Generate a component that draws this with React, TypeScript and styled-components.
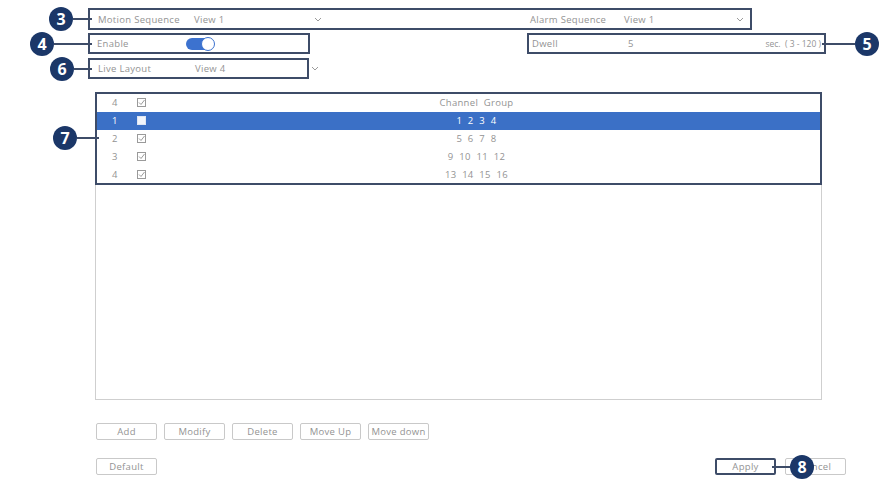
import React from "react";
import styled, { createGlobalStyle } from "styled-components";

const Global = createGlobalStyle`
  html, body { margin: 0; padding: 0; background: #ffffff; }
  body { font-family: "Open Sans", "Liberation Sans", sans-serif; }
`;

const NAVY = "#1b3768";
const FRAME = "#3e4c68";
const TEXT = "#939393";

const Page = styled.div`
  width: 884px;
  height: 481px;
  box-sizing: border-box;
  padding: 8px 0 0 88px;
  display: flex;
  flex-direction: column;
  color: ${TEXT};
  font-size: 9.5px;
  letter-spacing: 0.3px;
  overflow: hidden;
`;

const Framed = styled.div<{ $w: number; $h?: number }>`
  position: relative;
  box-sizing: border-box;
  width: ${(p) => p.$w}px;
  height: ${(p) => p.$h ?? 21}px;
  border: 2px solid ${FRAME};
  display: flex;
  align-items: center;
`;

const Row = styled.div<{ $mt?: number }>`
  display: flex;
  align-items: center;
  margin-top: ${(p) => p.$mt ?? 0}px;
`;

const Label = styled.span<{ $w: number }>`
  width: ${(p) => p.$w}px;
  flex: none;
  white-space: nowrap;
`;

const Range = styled.span`
  flex: 1;
  text-align: right;
  padding-right: 3px;
  font-size: 8.5px;
  letter-spacing: 0;
  white-space: nowrap;
`;

const Chevron = styled.span<{ $ml: number }>`
  margin-left: ${(p) => p.$ml}px;
  display: inline-flex;
  align-items: center;
`;

const Badge = styled.div<{ $side: "left" | "right"; $line: number }>`
  position: absolute;
  top: 50%;
  ${(p) => (p.$side === "left" ? `right: calc(100% + ${p.$line}px);` : `left: calc(100% + ${p.$line}px);`)}
  transform: translateY(-50%);
  width: 24px;
  height: 24px;
  border-radius: 50%;
  background: ${NAVY};
  color: #fff;
  font-family: "Open Sans", "Liberation Sans", sans-serif;
  font-weight: 700;
  font-size: 16px;
  letter-spacing: 0;
  display: flex;
  align-items: center;
  justify-content: center;
  z-index: 3;
  &::after {
    content: "";
    position: absolute;
    top: 50%;
    height: 2px;
    margin-top: -1px;
    width: ${(p) => p.$line + 2}px;
    background: ${FRAME};
    ${(p) => (p.$side === "left" ? "left: 100%;" : "right: 100%;")}
  }
`;

const Toggle = styled.span`
  position: relative;
  width: 28px;
  height: 12px;
  border-radius: 6px;
  background: #3c72cf;
  display: inline-block;
  &::after {
    content: "";
    position: absolute;
    right: -1px;
    top: -1px;
    width: 12px;
    height: 12px;
    border-radius: 50%;
    background: #fff;
    border: 1px solid #3c72cf;
  }
`;

const Panel = styled.div`
  margin: 13px 0 0 7px;
  width: 727px;
  height: 308px;
  box-sizing: border-box;
  border: 1px solid #cfcfcf;
`;

const Table = styled.div`
  position: relative;
  margin: -1px;
  box-sizing: border-box;
  border: 2px solid ${FRAME};
  display: flex;
  flex-direction: column;
`;

const TRow = styled.div<{ $sel?: boolean }>`
  display: grid;
  grid-template-columns: 34px 22px 1fr 20px;
  align-items: center;
  height: 17.8px;
  background: ${(p) => (p.$sel ? "#3b70c6" : "transparent")};
  color: ${(p) => (p.$sel ? "#ffffff" : TEXT)};
`;

const Cell = styled.span<{ $center?: boolean }>`
  text-align: ${(p) => (p.$center ? "center" : "left")};
  padding-left: ${(p) => (p.$center ? 0 : 15)}px;
  white-space: nowrap;
  word-spacing: 3px;
`;

const CheckCell = styled.span`
  padding-left: 6px;
  display: flex;
  align-items: center;
`;

const Check = ({ filled }: { filled?: boolean }) => (
  <svg width="9" height="9" viewBox="0 0 9 9">
    {filled ? (
      <rect x="0.5" y="0.5" width="8" height="8" fill="#f2f5fb" stroke="#dfe6f3" />
    ) : (
      <>
        <rect x="0.5" y="0.5" width="8" height="8" fill="none" stroke="#9a9a9a" />
        <path d="M2 4.5 L4 6.5 L7.5 2" fill="none" stroke="#9a9a9a" strokeWidth="1" />
      </>
    )}
  </svg>
);

const ButtonRow = styled.div<{ $mt: number; $w?: number }>`
  display: flex;
  align-items: center;
  gap: 7px;
  margin: ${(p) => p.$mt}px 0 0 8px;
  width: ${(p) => (p.$w ? `${p.$w}px` : "auto")};
`;

const Btn = styled.button<{ $strong?: boolean }>`
  width: 61px;
  height: 17px;
  box-sizing: border-box;
  padding: 0;
  background: #fff;
  border: ${(p) => (p.$strong ? `2px solid ${FRAME}` : "1px solid #c9c9c9")};
  border-radius: 2px;
  color: ${TEXT};
  font-family: inherit;
  font-size: 9.5px;
  letter-spacing: 0.3px;
  white-space: nowrap;
  position: relative;
`;

const Spacer = styled.div`
  flex: 1;
`;

const ChevronIcon = () => (
  <svg width="8" height="5" viewBox="0 0 8 5">
    <path d="M1 1 L4 4 L7 1" fill="none" stroke="#9a9a9a" strokeWidth="1" />
  </svg>
);

const groups = [
  { n: "1", g: "1 2 3 4", sel: true },
  { n: "2", g: "5 6 7 8" },
  { n: "3", g: "9 10 11 12" },
  { n: "4", g: "13 14 15 16" },
];

export default function App() {
  return (
    <>
      <Global />
      <Page>
        <Framed $w={664} $h={22}>
          <Badge $side="left" $line={17}>3</Badge>
          <Label $w={96} style={{ paddingLeft: 8 }}>Motion Sequence</Label>
          <Label $w={120}>View 1</Label>
          <Chevron $ml={0}><ChevronIcon /></Chevron>
          <Label $w={208} />
          <Label $w={94}>Alarm Sequence</Label>
          <Label $w={112}>View 1</Label>
          <ChevronIcon />
        </Framed>
        <Row $mt={3}>
          <Framed $w={222}>
            <Badge $side="left" $line={36}>4</Badge>
            <Label $w={89} style={{ paddingLeft: 7 }}>Enable</Label>
            <Toggle />
          </Framed>
          <Framed $w={299} style={{ marginLeft: 217 }}>
            <Badge $side="right" $line={31}>5</Badge>
            <Label $w={96} style={{ paddingLeft: 3 }}>Dwell</Label>
            <Label $w={20}>5</Label>
            <Range>sec.&nbsp;&nbsp;( 3 - 120 )</Range>
          </Framed>
        </Row>
        <Row $mt={4}>
          <Framed $w={221}>
            <Badge $side="left" $line={16}>6</Badge>
            <Label $w={97} style={{ paddingLeft: 8 }}>Live Layout</Label>
            <Label $w={110}>View 4</Label>
          </Framed>
          <Chevron $ml={2}><ChevronIcon /></Chevron>
        </Row>
        <Panel>
          <Table>
            <Badge $side="left" $line={20}>7</Badge>
            <TRow>
              <Cell>4</Cell>
              <CheckCell><Check /></CheckCell>
              <Cell $center>Channel Group</Cell>
            </TRow>
            {groups.map((r) => (
              <TRow key={r.n} $sel={r.sel}>
                <Cell>{r.n}</Cell>
                <CheckCell><Check filled={r.sel} /></CheckCell>
                <Cell $center>{r.g}</Cell>
              </TRow>
            ))}
          </Table>
        </Panel>
        <ButtonRow $mt={23}>
          <Btn>Add</Btn>
          <Btn>Modify</Btn>
          <Btn>Delete</Btn>
          <Btn>Move Up</Btn>
          <Btn>Move down</Btn>
        </ButtonRow>
        <ButtonRow $mt={18} $w={750}>
          <Btn>Default</Btn>
          <Spacer />
          <Btn $strong>
            Apply
            <Badge $side="right" $line={16}>8</Badge>
          </Btn>
          <Btn style={{ marginLeft: 2 }}>Cancel</Btn>
        </ButtonRow>
      </Page>
    </>
  );
}
